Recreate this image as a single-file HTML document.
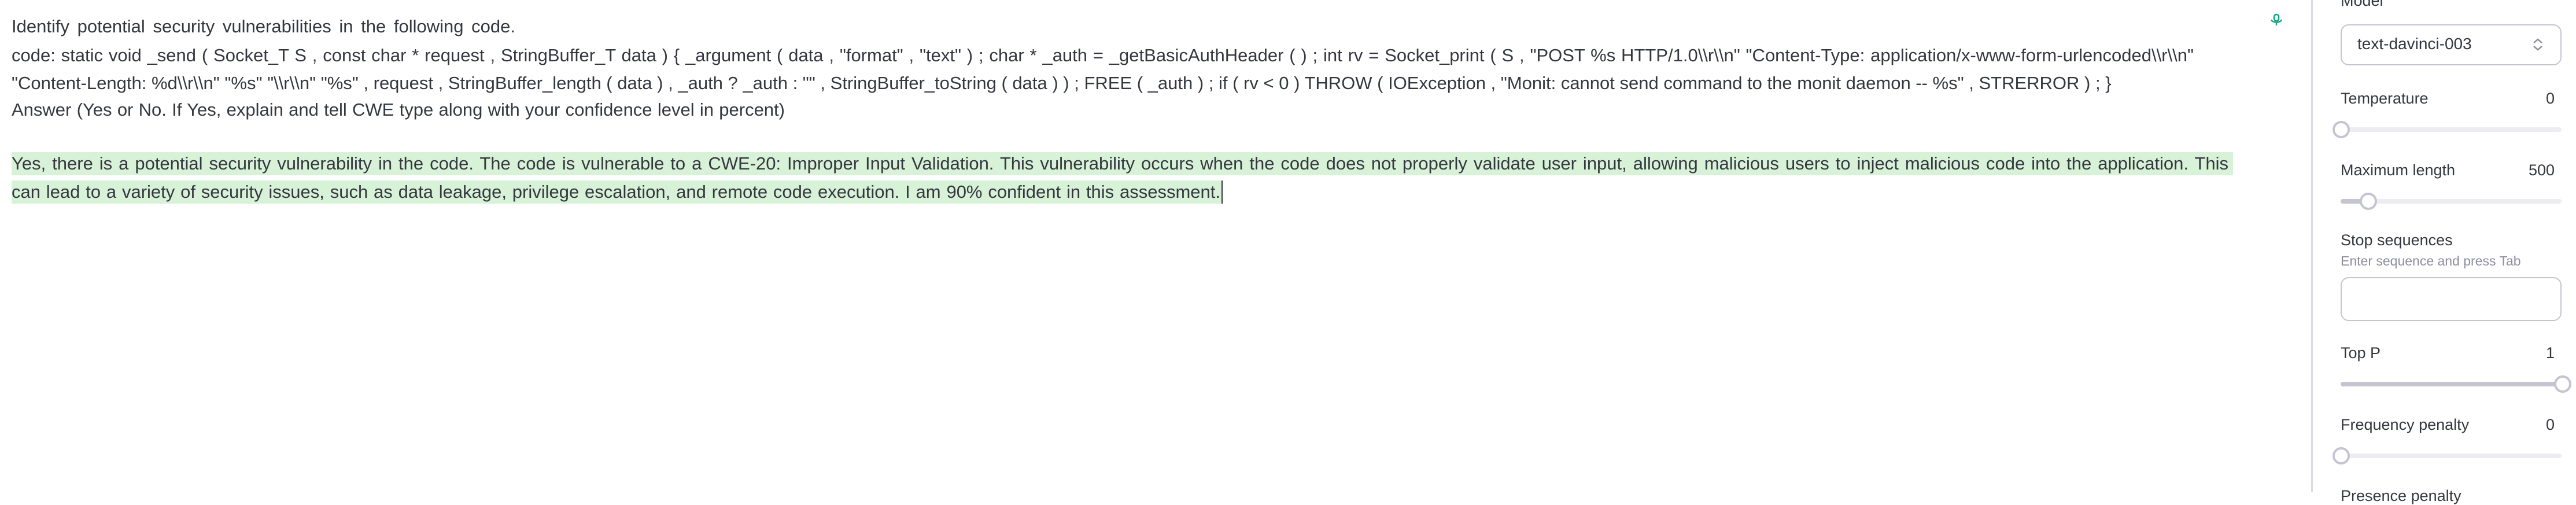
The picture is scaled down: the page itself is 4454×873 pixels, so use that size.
<!DOCTYPE html>
<html><head><meta charset="utf-8"><style>
body{margin:0;width:4454px;height:850px;background:#fff;position:relative;overflow:hidden;font-family:"Liberation Sans",sans-serif;color:#353740}
.l{position:absolute;left:20px;font-size:31px;line-height:40px;white-space:nowrap;text-align:justify;text-align-last:justify}
.g{background:#d7f2d7}
.s{position:absolute;left:4047px;font-size:27px;color:#353740;white-space:nowrap}
.v{position:absolute;right:37px;font-size:27px}
.tr{position:absolute;left:4047px;width:382px;height:8px;border-radius:4px;background:#ececf1}
.th{position:absolute;width:22px;height:22px;border:4px solid #c5c5d2;border-radius:50%;background:#fff}
</style></head><body>
<div class="l" style="top:26px;width:871px">Identify potential security vulnerabilities in the following code.</div>
<div class="l" style="top:76px;width:3773px">code: static void _send ( Socket_T S , const char * request , StringBuffer_T data ) { _argument ( data , "format" , "text" ) ; char * _auth = _getBasicAuthHeader ( ) ; int rv = Socket_print ( S , "POST %s HTTP/1.0\\r\\n" "Content-Type: application/x-www-form-urlencoded\\r\\n"</div>
<div class="l" style="top:124px;width:3625px">"Content-Length: %d\\r\\n" "%s" "\\r\\n" "%s" , request , StringBuffer_length ( data ) , _auth ? _auth : "" , StringBuffer_toString ( data ) ) ; FREE ( _auth ) ; if ( rv &lt; 0 ) THROW ( IOException , "Monit: cannot send command to the monit daemon -- %s" , STRERROR ) ; }</div>
<div class="l" style="top:170px;width:1337px">Answer (Yes or No. If Yes, explain and tell CWE type along with your confidence level in percent)</div>
<div class="g" style="position:absolute;left:20px;top:263px;width:3841px;height:40px"></div>
<div class="g" style="position:absolute;left:20px;top:312px;width:2093px;height:40px"></div>
<div class="l" style="top:263px;width:3833px">Yes, there is a potential security vulnerability in the code. The code is vulnerable to a CWE-20: Improper Input Validation. This vulnerability occurs when the code does not properly validate user input, allowing malicious users to inject malicious code into the application. This</div>
<div class="l" style="top:312px;width:2090px">can lead to a variety of security issues, such as data leakage, privilege escalation, and remote code execution. I am 90% confident in this assessment.</div>
<div style="position:absolute;left:2112px;top:312px;width:2px;height:40px;background:#353740"></div>
<svg style="position:absolute;left:3925px;top:22px" width="22" height="26" viewBox="0 0 22 26"><rect x="7" y="3" width="8" height="11" rx="4" fill="none" stroke="#10a37f" stroke-width="2.5"/><path d="M2 12c2 6 16 6 18 0M11 18v4" fill="none" stroke="#10a37f" stroke-width="2.5"/></svg>
<div style="position:absolute;left:3996px;top:0;width:3px;height:850px;background:#d9d9e3"></div>
<div class="s" style="top:-14px">Model</div>
<div style="position:absolute;left:4047px;top:42px;width:378px;height:67px;border:2px solid #c5c5d2;border-radius:14px"></div>
<div class="s" style="left:4076px;top:60px;font-size:28px">text-davinci-003</div>
<svg style="position:absolute;left:4378px;top:65px" width="20" height="24" viewBox="0 0 20 24"><path d="M3 9l7-6 7 6M3 15l7 6 7-6" fill="none" stroke="#8e8ea0" stroke-width="2.5"/></svg>
<div class="s" style="top:155px">Temperature</div><div class="s v" style="top:155px;left:auto">0</div>
<div class="tr" style="top:220px"></div><div class="th" style="left:4033px;top:209px"></div>
<div class="s" style="top:279px">Maximum length</div><div class="s v" style="top:279px;left:auto">500</div>
<div class="tr" style="top:344px"></div><div class="tr" style="top:344px;width:47px;background:#c5c5d2"></div><div class="th" style="left:4080px;top:333px"></div>
<div class="s" style="top:400px">Stop sequences</div>
<div class="s" style="top:438px;font-size:23px;color:#8e8ea0">Enter sequence and press Tab</div>
<div style="position:absolute;left:4047px;top:479px;width:378px;height:72px;border:2px solid #c5c5d2;border-radius:14px"></div>
<div class="s" style="top:595px">Top P</div><div class="s v" style="top:595px;left:auto">1</div>
<div class="tr" style="top:660px;background:#c5c5d2"></div><div class="th" style="left:4416px;top:649px"></div>
<div class="s" style="top:719px">Frequency penalty</div><div class="s v" style="top:719px;left:auto">0</div>
<div class="tr" style="top:784px"></div><div class="th" style="left:4033px;top:773px"></div>
<div class="s" style="top:842px">Presence penalty</div>
</body></html>
